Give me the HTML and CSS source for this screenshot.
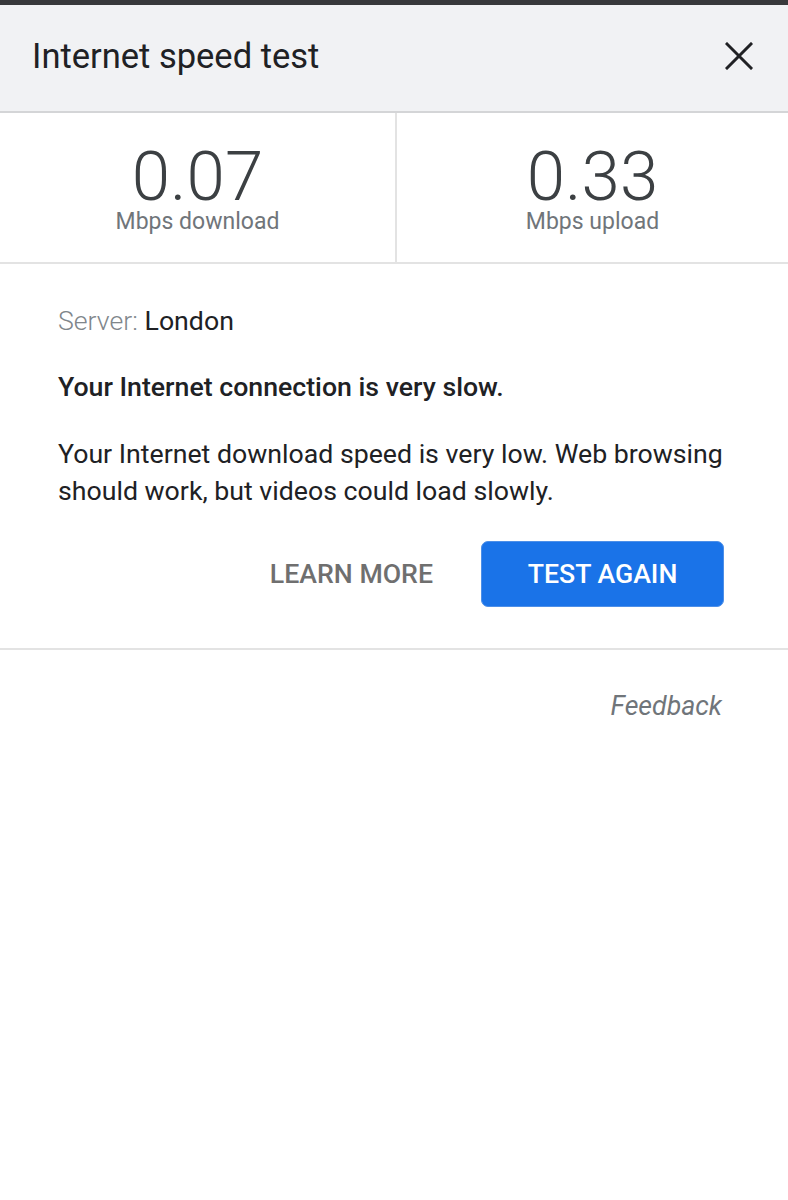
FILE: index.html
```html
<!DOCTYPE html>
<html>
<head>
<meta charset="utf-8">
<link rel="stylesheet" href="styles.css">
</head>
<body>
<div class="topbar"></div>
<header class="header">
  <h1 class="title">Internet speed test</h1>
  <button class="close" aria-label="Close">
    <svg width="28" height="28" viewBox="0 0 28 28"><path d="M2 2L26 26M26 2L2 26" stroke="#202124" stroke-width="3" stroke-linecap="square"/></svg>
  </button>
</header>
<section class="stats">
  <div class="stat">
    <div class="num">0.07</div>
    <div class="unit">Mbps download</div>
  </div>
  <div class="stat">
    <div class="num">0.33</div>
    <div class="unit">Mbps upload</div>
  </div>
</section>
<section class="content">
  <p class="server"><span class="label">Server:</span> London</p>
  <p class="headline">Your Internet connection is very slow.</p>
  <p class="desc">Your Internet download speed is very low. Web browsing should work, but videos could load slowly.</p>
  <div class="actions">
    <button class="btn-text">LEARN MORE</button>
    <button class="btn-primary">TEST AGAIN</button>
  </div>
</section>
<footer class="footer">
  <a class="feedback">Feedback</a>
</footer>
</body>
</html>
```

FILE: styles.css
```css
html, body {
  margin: 0;
  padding: 0;
  background: #ffffff;
  font-family: Roboto, "Noto Sans", sans-serif;
  color: #202124;
}
.topbar {
  height: 5px;
  background: #38393b;
}
.header {
  height: 108px;
  background: #f1f2f4;
  border-bottom: 2px solid #d4d5d7;
  display: flex;
  align-items: center;
  justify-content: space-between;
  padding: 0 35px 4px 32px;
  box-sizing: border-box;
}
.title {
  margin: 0;
  font-size: 34.5px;
  font-weight: 400;
  color: #202124;
}
.close {
  background: none;
  border: 0;
  padding: 0;
  width: 28px;
  height: 28px;
  display: flex;
}
.stats {
  display: grid;
  grid-template-columns: 395px 1fr;
  height: 151px;
  border-bottom: 2px solid #e3e3e3;
  box-sizing: border-box;
}
.stat {
  display: flex;
  flex-direction: column;
  align-items: center;
  padding-top: 32px;
}
.stat + .stat {
  border-left: 2px solid #e3e3e3;
}
.num {
  font-size: 69px;
  font-weight: 300;
  line-height: 64px;
  color: #3c4043;
}
.unit {
  font-size: 23px;
  color: #70757a;
  line-height: 22px;
  margin-top: 2px;
}
.content {
  padding: 40px 64px 41px 58px;
  border-bottom: 2px solid #e3e3e3;
}
.server {
  margin: 0;
  font-size: 26.7px;
  line-height: 34px;
  color: #202124;
}
.label {
  color: #80868b;
  font-weight: 300;
}
.headline {
  margin: 32px 0 0;
  font-size: 26.7px;
  line-height: 34px;
  font-weight: 500;
}
.desc {
  margin: 32px 0 0;
  font-size: 26.7px;
  line-height: 37px;
  color: #202124;
}
.actions {
  display: flex;
  justify-content: flex-end;
  align-items: center;
  gap: 48px;
  margin-top: 31px;
}
.btn-text {
  background: none;
  border: 0;
  padding: 0;
  font-family: inherit;
  font-size: 26.7px;
  font-weight: 500;
  color: #6f6f6f;
}
.btn-primary {
  width: 243px;
  height: 66px;
  background: #1a73e8;
  border: 1px solid #4d8fe8;
  border-radius: 7px;
  color: #ffffff;
  font-family: inherit;
  font-size: 26.7px;
  font-weight: 500;
}
.footer {
  display: flex;
  justify-content: flex-end;
  padding: 40px 66px 0 0;
}
.feedback {
  font-size: 26.7px;
  font-style: italic;
  color: #70757a;
}
```
